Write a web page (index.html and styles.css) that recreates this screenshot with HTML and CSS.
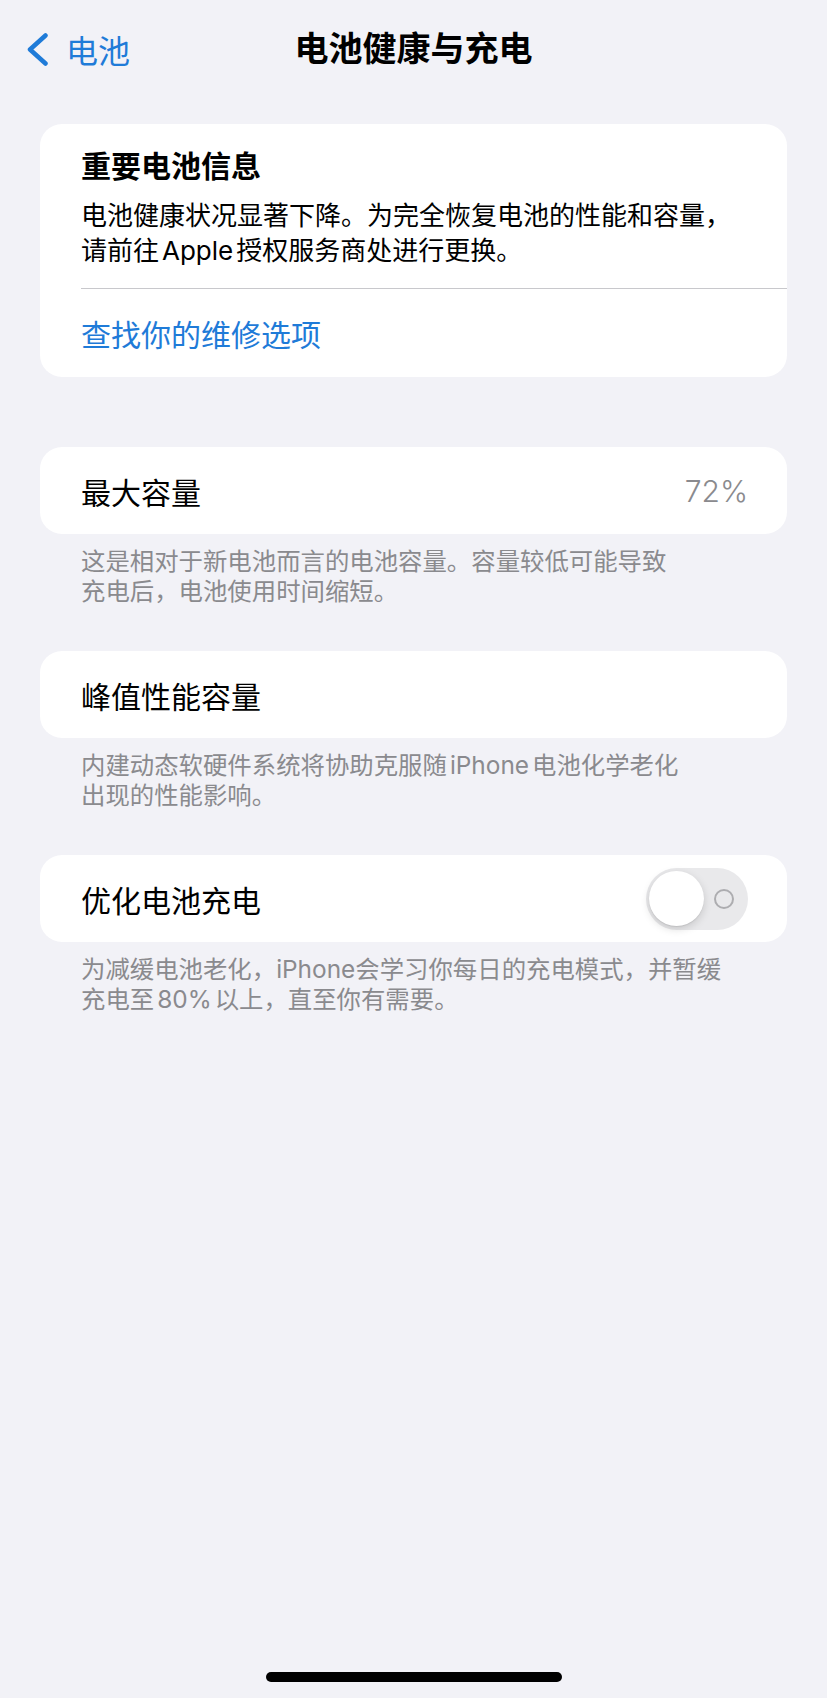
FILE: index.html
```html
<!DOCTYPE html>
<html lang="zh-CN">
<head>
  <meta charset="utf-8">
  <title>电池健康与充电</title>
  <link rel="stylesheet" href="styles.css">
</head>
<body>
  <div class="navbar">
    <a class="back" href="#">
      <svg class="back-chevron" width="23" height="33" viewBox="0 0 23 33">
        <path d="M19.5 2.5 L4 16.5 L19.5 30.5" fill="none" stroke="#1f7bd8" stroke-width="4.5" stroke-linecap="round" stroke-linejoin="round"/>
      </svg>
      <span>电池</span>
    </a>
    <div class="nav-title">电池健康与充电</div>
    <div></div>
  </div>

  <div class="content">
    <!-- Battery notice -->
    <div class="group group-notice">
      <div class="card">
        <div class="notice">
          <div class="notice-title">重要电池信息</div>
          <div class="notice-text">电池健康状况显著下降。为完全恢复电池的性能和容量，<br>请前往<span class="latin">Apple</span>授权服务商处进行更换。</div>
          <div class="separator"></div>
          <a class="notice-link" href="#">查找你的维修选项</a>
        </div>
      </div>
    </div>

    <!-- Maximum capacity -->
    <div class="group">
      <div class="card row">
        <span>最大容量</span>
        <span class="row-value">72%</span>
      </div>
      <div class="footnote">这是相对于新电池而言的电池容量。容量较低可能导致<br>充电后，电池使用时间缩短。</div>
    </div>

    <!-- Peak performance -->
    <div class="group">
      <div class="card row">
        <span>峰值性能容量</span>
      </div>
      <div class="footnote">内建动态软硬件系统将协助克服随<span class="latin">iPhone</span>电池化学老化<br>出现的性能影响。</div>
    </div>

    <!-- Optimized charging -->
    <div class="group">
      <div class="card row">
        <span>优化电池充电</span>
        <div class="toggle">
          <div class="toggle-knob"></div>
          <div class="toggle-ring"></div>
        </div>
      </div>
      <div class="footnote">为减缓电池老化，iPhone会学习你每日的充电模式，并暂缓<br>充电至<span class="latin">80%</span>以上，直至你有需要。</div>
    </div>
  </div>

  <div class="home-indicator"></div>
</body>
</html>
```

FILE: styles.css
```css
* {
  box-sizing: border-box;
}

body {
  margin: 0;
  height: 1698px;
  background-color: #f2f2f7;
  font-family: "Inter", "Noto Sans CJK SC", sans-serif;
  color: #000000;
  display: flex;
  flex-direction: column;
  overflow: hidden;
}

a {
  text-decoration: none;
}

.latin {
  margin: 0 3px;
}

.navbar {
  height: 92px;
  display: grid;
  grid-template-columns: 1fr auto 1fr;
  align-items: center;
}

.back {
  display: flex;
  align-items: center;
  gap: 17px;
  padding-left: 26px;
  padding-top: 6px;
  color: #1f7bd8;
  font-size: 32px;
}

.back-chevron {
  display: block;
}

.nav-title {
  font-size: 34px;
  font-weight: 700;
}

.content {
  padding: 32px 40px 0;
}

.group {
  margin-bottom: 45px;
}

.group-notice {
  margin-bottom: 70px;
}

.card {
  background-color: #ffffff;
  border-radius: 22px;
}

.notice {
  padding: 22px 0 0 41px;
}

.notice-title {
  font-size: 30px;
  font-weight: 700;
  line-height: 40px;
  padding-right: 40px;
}

.notice-text {
  margin-top: 12px;
  font-size: 26px;
  line-height: 35px;
  padding-right: 30px;
}

.separator {
  margin-top: 20px;
  height: 1px;
  background-color: #c8c8cc;
}

.notice-link {
  height: 88px;
  display: flex;
  align-items: center;
  color: #1f7bd8;
  font-size: 30px;
}

.row {
  height: 87px;
  display: flex;
  align-items: center;
  justify-content: space-between;
  padding: 0 39px 0 41px;
  font-size: 30px;
}

.row-value {
  color: #8a8a8e;
  font-weight: 300;
}

.footnote {
  padding: 13px 41px 0;
  font-size: 24.4px;
  line-height: 29.5px;
  color: #8a8a8e;
  white-space: nowrap;
}

.toggle {
  width: 102px;
  height: 62px;
  border-radius: 31px;
  background-color: #e9e9eb;
  display: flex;
  align-items: center;
  justify-content: space-between;
  padding: 0 14px 0 3px;
}

.toggle-knob {
  width: 55px;
  height: 55px;
  border-radius: 50%;
  background-color: #ffffff;
  box-shadow: 0 3px 8px rgba(0,0,0,0.15), 0 1px 1px rgba(0,0,0,0.08);
}

.toggle-ring {
  width: 20px;
  height: 20px;
  border-radius: 50%;
  border: 2px solid #adadb0;
}

.home-indicator {
  margin-top: auto;
  margin-bottom: 16px;
  align-self: center;
  width: 296px;
  height: 10px;
  border-radius: 5px;
  background-color: #000000;
}
```
